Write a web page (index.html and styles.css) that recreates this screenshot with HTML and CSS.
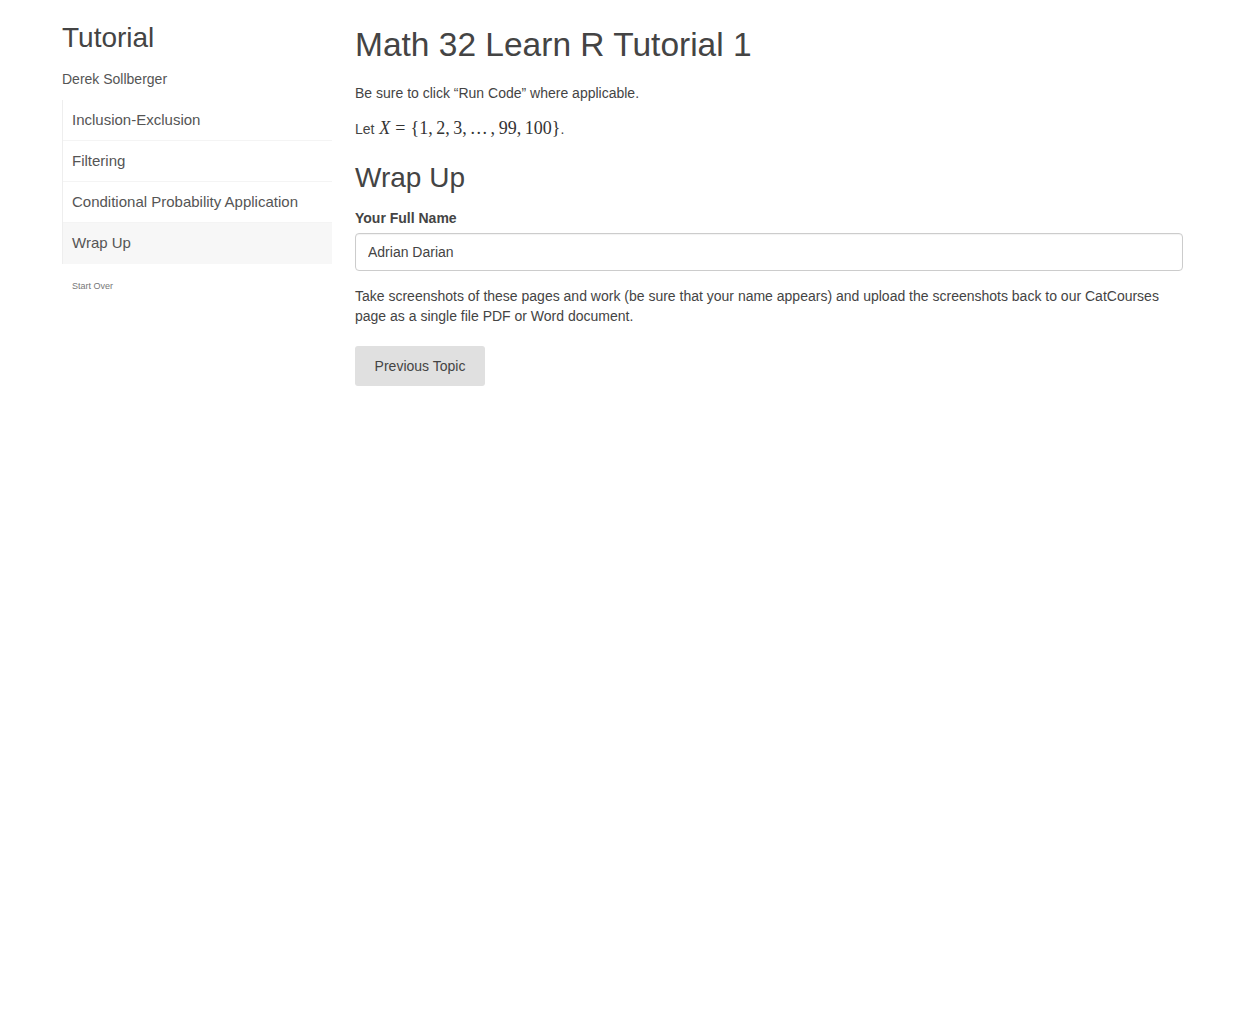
FILE: index.html
```html
<!DOCTYPE html>
<html>
<head>
<meta charset="utf-8">
<link rel="stylesheet" href="styles.css">
</head>
<body>
<div class="page">
  <aside class="sidebar">
    <h1 class="side-title">Tutorial</h1>
    <div class="author">Derek Sollberger</div>
    <ul class="topics">
      <li class="topic">Inclusion-Exclusion</li>
      <li class="topic">Filtering</li>
      <li class="topic">Conditional Probability Application</li>
      <li class="topic active">Wrap Up</li>
    </ul>
    <div class="start-over">Start Over</div>
  </aside>
  <main class="content">
    <h1 class="title">Math 32 Learn R Tutorial 1</h1>
    <p class="intro">Be sure to click “Run Code” where applicable.</p>
    <p class="let">Let <span class="math"><i>X</i><span class="eq">=</span>{1,&thinsp;2,&thinsp;3,&thinsp;.&hairsp;.&hairsp;.&thinsp;,&thinsp;99,&thinsp;100}</span>.</p>
    <h2 class="section">Wrap Up</h2>
    <label class="label" for="name">Your Full Name</label>
    <input class="input" id="name" type="text" value="Adrian Darian">
    <p class="note">Take screenshots of these pages and work (be sure that your name appears) and upload the screenshots back to our CatCourses page as a single file PDF or Word document.</p>
    <button class="btn">Previous Topic</button>
  </main>
</div>
</body>
</html>
```
FILE: styles.css
```css
html, body {
  margin: 0;
  padding: 0;
  background: #fff;
}
body {
  font-family: "Liberation Sans", Arial, sans-serif;
  font-size: 14px;
  line-height: 20px;
  color: #444;
}
.page {
  display: flex;
  gap: 23px;
  padding: 0 62px;
}
.sidebar {
  width: 270px;
  flex: none;
}
.side-title {
  margin: 22px 0 0;
  font-size: 28px;
  line-height: 32px;
  font-weight: 400;
  color: #444;
}
.author {
  margin-top: 15px;
  font-size: 14px;
  line-height: 20px;
  color: #555;
}
.topics {
  list-style: none;
  margin: 11px 0 0;
  padding: 0;
  border-left: 1px solid #eee;
}
.topic {
  font-size: 15px;
  line-height: 20px;
  padding: 10px 10px 10px 9px;
  border-bottom: 1px solid #f4f4f4;
  color: #555;
}
.topic.active {
  background: #f7f7f7;
  border-bottom: none;
  padding-bottom: 11px;
}
.start-over {
  margin-top: 16px;
  padding-left: 10px;
  font-size: 9px;
  line-height: 12px;
  color: #777;
}
.content {
  flex: 1;
  min-width: 0;
  max-width: 828px;
}
.title {
  margin: 25px 0 0;
  font-size: 33.5px;
  line-height: 40px;
  font-weight: 400;
  color: #444;
}
.intro {
  margin: 18px 0 0;
}
.let {
  margin: 13px 0 0;
  line-height: 24px;
}
.math {
  font-family: "Liberation Serif", "Times New Roman", serif;
  font-size: 18px;
  color: #333;
}
.math i {
  margin-left: 1px;
}
.eq {
  padding: 0 5px;
}
.section {
  margin: 20px 0 0;
  font-size: 28px;
  line-height: 34px;
  font-weight: 400;
  color: #444;
}
.label {
  display: block;
  margin-top: 13px;
  font-weight: 700;
  color: #444;
}
.input {
  display: block;
  box-sizing: border-box;
  width: 100%;
  height: 38px;
  margin-top: 5px;
  padding: 6px 12px;
  font-family: inherit;
  font-size: 14px;
  color: #444;
  border: 1px solid #ccc;
  border-radius: 4px;
  box-shadow: inset 0 1px 1px rgba(0,0,0,0.05);
  outline: none;
}
.note {
  margin: 15px 0 0;
}
.btn {
  display: block;
  margin-top: 20px;
  width: 130px;
  height: 40px;
  border: none;
  border-radius: 3px;
  background: #e0e0e0;
  font-family: inherit;
  font-size: 14px;
  color: #444;
  padding: 0;
}
```
